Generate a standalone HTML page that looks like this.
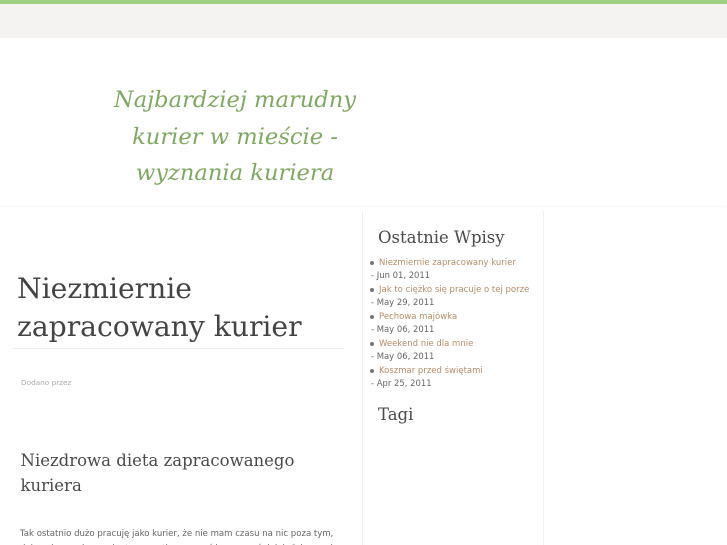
<!DOCTYPE html>
<html><head><meta charset="utf-8">
<style>
html,body{margin:0;padding:0;width:727px;height:545px;overflow:hidden;background:#fff}
body{position:relative;font-family:"DejaVu Sans",sans-serif;font-size:8.5px;color:#666}
div{position:absolute;white-space:nowrap}
.s{font-family:"DejaVu Serif",serif;color:#4a4a4a}
.l{left:379px;color:#b58d68;font-size:8.5px;line-height:11px}
.d{left:371px;color:#666;font-size:8.45px;line-height:11px}
.b{left:370px;width:4px;height:4px;border-radius:50%;background:#777}
</style></head><body>
<div style="left:0;top:0;width:727px;height:4px;background:#9ccf7f"></div>
<div style="left:0;top:4px;width:727px;height:34px;background:#f4f3f1"></div>
<div class="s" style="left:85px;width:300px;top:82px;text-align:center;font-style:italic;font-size:22.6px;line-height:36.5px;color:#7fa862">Najbardziej marudny<br>kurier w mieście -<br>wyznania kuriera</div>
<div style="left:0;top:206px;width:727px;height:0;border-top:1px dotted #f2f2f2"></div>
<div style="left:362px;top:211px;width:1px;height:334px;background:#f0f0f0"></div>
<div style="left:543px;top:211px;width:1px;height:334px;background:#f0f0f0"></div>
<div class="s" style="left:17px;top:270px;font-size:28.2px;line-height:38px;color:#444">Niezmiernie<br>zapracowany kurier</div>
<div style="left:13px;top:348px;width:331px;height:1px;background:#eee"></div>
<div style="left:21px;top:378px;font-size:7.3px;line-height:10px;color:#aaa">Dodano przez</div>
<div class="s" style="left:20.5px;top:448px;font-size:16.5px;line-height:25px">Niezdrowa dieta zapracowanego<br>kuriera</div>
<div style="left:20px;top:527px;line-height:15px;font-size:8.56px">Tak ostatnio dużo pracuję jako kurier, że nie mam czasu na nic poza tym,<br>dokonałem wyboru, aby to wszystko ogarnąć i pracować dalej. Od rana do</div>
<div class="s" style="left:378px;top:228px;font-size:16.5px;line-height:20px">Ostatnie Wpisy</div>
<div class="b" style="top:261px"></div><div class="l" style="top:258px">Niezmiernie zapracowany kurier</div>
<div class="d" style="top:270px">- Jun 01, 2011</div>
<div class="b" style="top:288px"></div><div class="l" style="top:285px">Jak to ciężko się pracuje o tej porze</div>
<div class="d" style="top:297px">- May 29, 2011</div>
<div class="b" style="top:315px"></div><div class="l" style="top:312px">Pechowa majówka</div>
<div class="d" style="top:324px">- May 06, 2011</div>
<div class="b" style="top:342px"></div><div class="l" style="top:339px">Weekend nie dla mnie</div>
<div class="d" style="top:351px">- May 06, 2011</div>
<div class="b" style="top:369px"></div><div class="l" style="top:366px">Koszmar przed świętami</div>
<div class="d" style="top:378px">- Apr 25, 2011</div>
<div class="s" style="left:378px;top:405px;font-size:16.5px;line-height:20px">Tagi</div>
</body></html>
